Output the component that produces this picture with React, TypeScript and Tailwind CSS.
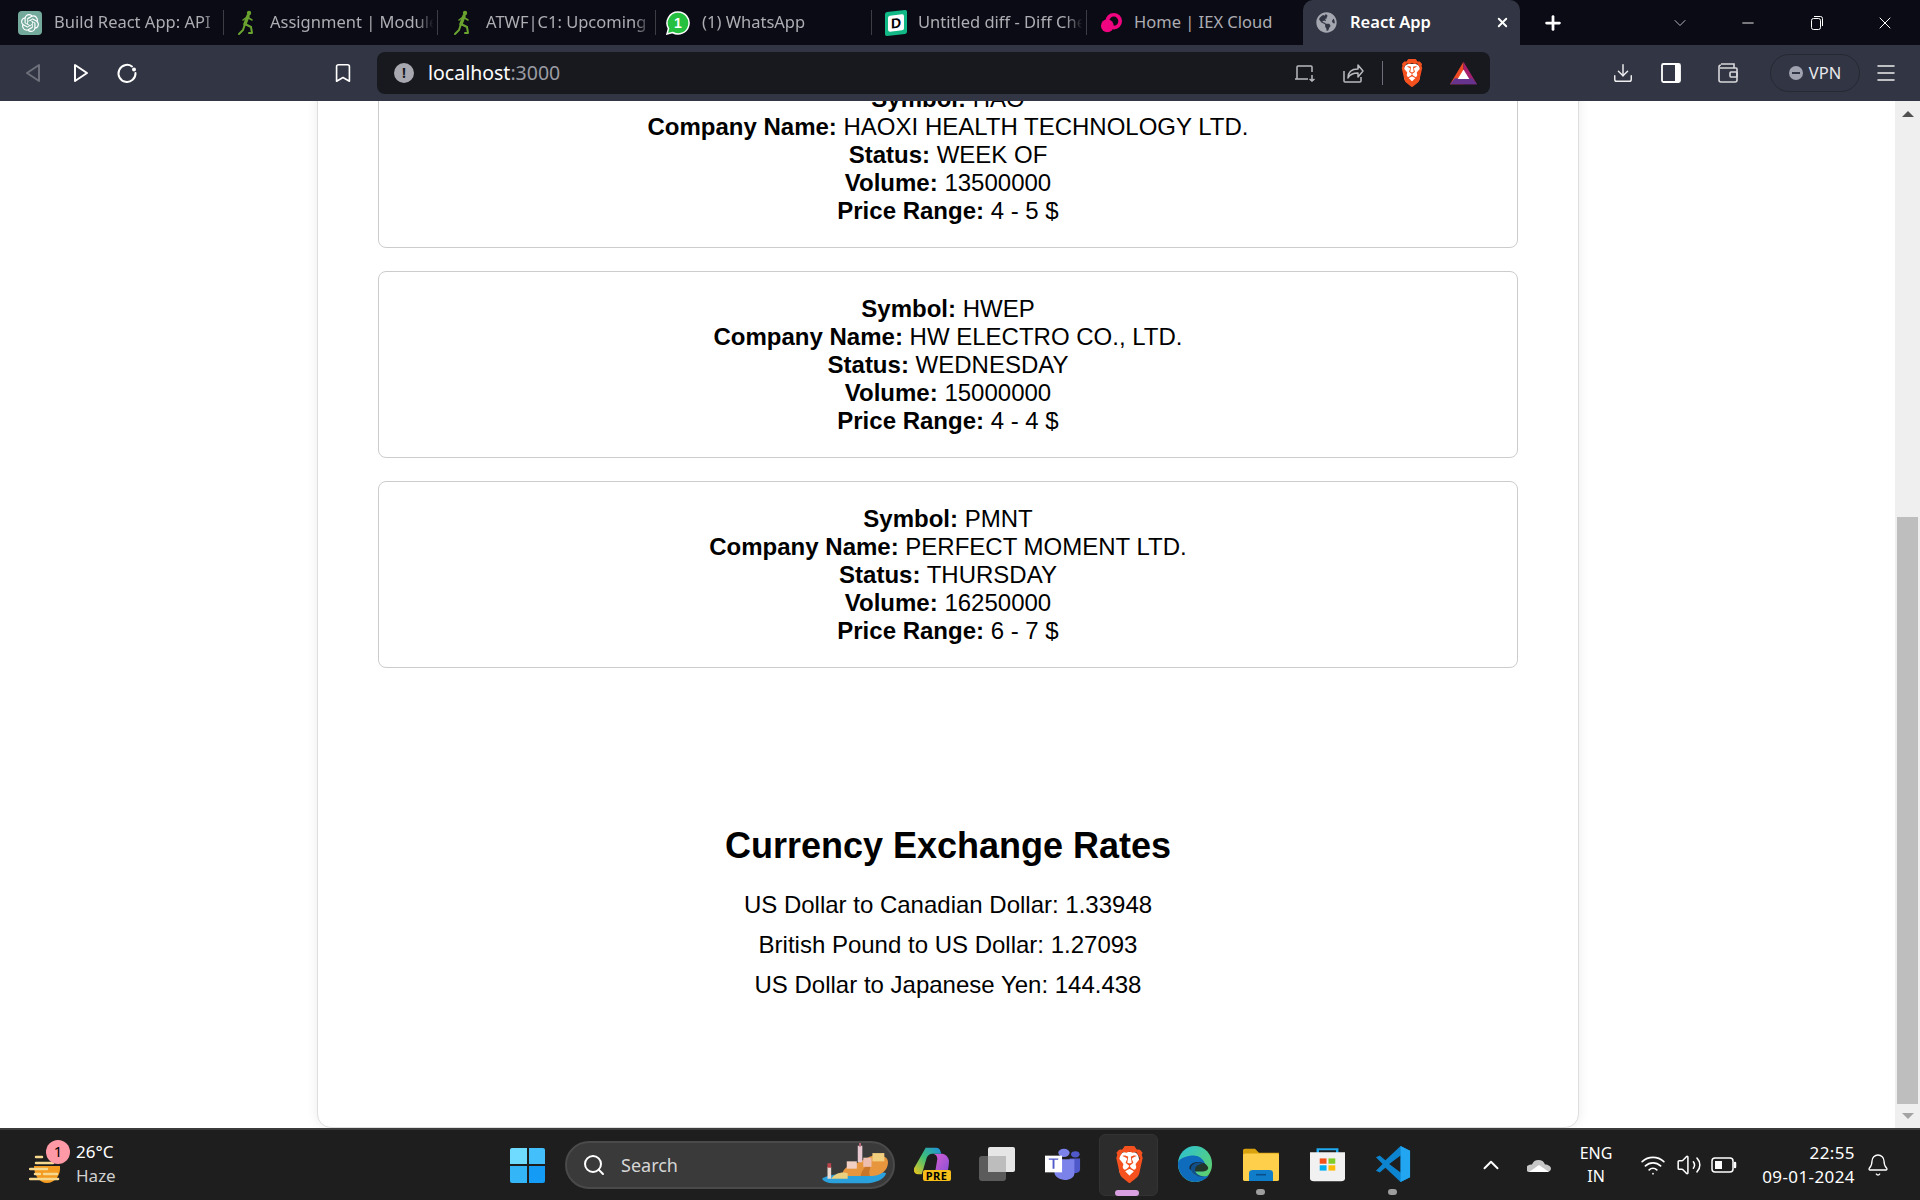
import { ChevronDown, Minus, X, Plus, Bookmark, Download, Menu, Search, Bell, ChevronUp, Wifi, Volume2 } from 'lucide-react';
import { FaGlobeAmericas } from 'react-icons/fa';
import { SiBrave, SiOpenai } from 'react-icons/si';

const ui = "font-['Noto_Sans',sans-serif]";

const ipos = [
  { symbol: 'HAO', name: 'HAOXI HEALTH TECHNOLOGY LTD.', status: 'WEEK OF', volume: '13500000', range: '4 - 5 $' },
  { symbol: 'HWEP', name: 'HW ELECTRO CO., LTD.', status: 'WEDNESDAY', volume: '15000000', range: '4 - 4 $' },
  { symbol: 'PMNT', name: 'PERFECT MOMENT LTD.', status: 'THURSDAY', volume: '16250000', range: '6 - 7 $' },
];

function IexIcon() {
  return (
    <svg viewBox="0 0 24 24" className="h-[22px] w-[22px]">
      <circle cx="15" cy="10" r="7" fill="none" stroke="#f0047f" strokeWidth="4" />
      <circle cx="8" cy="15" r="7" fill="#f0047f" />
    </svg>
  );
}

function DiffIcon() {
  return (
    <div className="grid h-[24px] w-[22px] -skew-y-6 place-items-center rounded-[2px] bg-[#12b886] px-[3px]">
      <span className="grid h-[16px] w-[16px] place-items-center rounded-[2px] bg-white font-['Liberation_Sans',sans-serif] text-[14px] leading-none font-bold text-black">D</span>
    </div>
  );
}

function WhatsAppIcon() {
  return (
    <div className="relative h-[24px] w-[24px]">
      <svg viewBox="0 0 24 24" className="absolute inset-0 h-[24px] w-[24px]">
        <path d="M12 1a11 11 0 1 1-5.500 20.500L1 23l1.500-5.500A11 11 0 0 1 12 1z" fill="#25c03f" stroke="#fff" strokeWidth="1.500" />
      </svg>
      <span className="absolute inset-0 grid place-items-center font-['Liberation_Sans',sans-serif] text-[14px] leading-none font-bold text-white">1</span>
    </div>
  );
}

function RunnerIcon() {
  return (
    <svg viewBox="0 0 16 26" className="h-[26px] w-[16px]" fill="none" stroke="#6aa32f" strokeLinecap="round" strokeLinejoin="round">
      <circle cx="11" cy="3" r="2.200" fill="#6aa32f" stroke="none" />
      <path d="M10 6 7 14" strokeWidth="3.500" />
      <path d="M9 7l5 3M9 7 5 10" strokeWidth="1.500" />
      <path d="M7 14l6 3 1 6h-3" strokeWidth="2" />
      <path d="M7 14l-2 6-4 4" strokeWidth="2" />
    </svg>
  );
}

const tabs = [
  { label: 'Build React App: API', width: 'w-[224px]', pad: 'pl-[18px]', gap: 'gap-[12px]', icon: <span className="grid h-[24px] w-[24px] place-items-center rounded-[4px] bg-[#74aa9c]"><SiOpenai className="h-[18px] w-[18px] text-white" /></span> },
  { label: 'Assignment | Module', width: 'w-[214px]', pad: 'pl-[10px]', gap: 'gap-[12px]', icon: <RunnerIcon /> },
  { label: 'ATWF|C1: Upcoming', width: 'w-[218px]', pad: 'pl-[12px]', gap: 'gap-[12px]', icon: <RunnerIcon /> },
  { label: '(1) WhatsApp', width: 'w-[216px]', pad: 'pl-[10px]', gap: 'gap-[12px]', icon: <WhatsAppIcon /> },
  { label: 'Untitled diff - Diff Checker', width: 'w-[215px]', pad: 'pl-[12px]', gap: 'gap-[10px]', icon: <DiffIcon /> },
];

function ChromeTab({ label, width, pad, gap, icon }: (typeof tabs)[number]) {
  return (
    <div className={`flex h-full shrink-0 items-center border-r border-[#3c3d45] ${width} ${pad} ${gap}`}>
      <span className="grid w-[24px] shrink-0 place-items-center">{icon}</span>
      <span className="min-w-0 flex-1 overflow-hidden pr-[4px] text-[16.500px] whitespace-nowrap text-[#adadb3] [mask-image:linear-gradient(to_right,black_88%,transparent_98%)]">{label}</span>
    </div>
  );
}

function TabBar() {
  return (
    <div className={`flex h-[45px] items-end bg-[#0b0b15] ${ui}`}>
      <div className="flex h-[45px] items-center py-[10px]">
        {tabs.map((tab) => (
          <ChromeTab key={tab.label} {...tab} />
        ))}
      </div>
      <div className="flex h-[45px] w-[216px] shrink-0 items-center gap-[12px] pl-[13px] text-[16.500px] text-[#adadb3]">
        <IexIcon />
        <span>Home | IEX Cloud</span>
      </div>
      <div className="flex h-[45px] w-[217px] shrink-0 items-center rounded-t-[10px] bg-[#323543] pr-[10px] pl-[13px]">
        <FaGlobeAmericas className="h-[21px] w-[21px] text-[#a5a7b0]" />
        <span className="ml-[13px] flex-1 text-[16.500px] font-semibold text-white">React App</span>
        <X className="h-[15px] w-[15px] text-white" strokeWidth={3} />
      </div>
      <div className="flex h-[45px] flex-1 items-center text-white">
        <Plus className="ml-[22px] h-[22px] w-[22px]" strokeWidth={3} />
        <ChevronDown className="ml-[106px] h-[20px] w-[20px] text-[#b6b6bc]" strokeWidth={1.2} />
        <Minus className="ml-[49px] h-[18px] w-[18px]" strokeWidth={1.2} />
        <svg viewBox="0 0 16 16" className="ml-[51px] h-[16px] w-[16px]" fill="none" stroke="#fff" strokeWidth="1">
          <rect x="3.500" y="3.500" width="9" height="11" rx="2" />
          <path d="M6 1.500h6.500a2 2 0 0 1 2 2V11" />
        </svg>
        <X className="ml-[51px] h-[20px] w-[20px]" strokeWidth={1.2} />
      </div>
    </div>
  );
}

function BatIcon() {
  return (
    <svg viewBox="0 0 28 28" preserveAspectRatio="none" className="h-[24px] w-[27px]">
      <path d="M14 1 0 27h14z" fill="#ef4b23" />
      <path d="M14 1 28 27H14z" fill="#a4206e" />
      <path d="M0 27 5 20h18l5 7z" fill="#66338f" />
      <path d="M14 10 8 21h12z" fill="#fff" />
    </svg>
  );
}

function BraveIcon({ size }: { size: string }) {
  return (
    <div className={`relative grid place-items-center ${size}`}>
      <span className="absolute inset-[18%] rounded-[30%] bg-white" />
      <SiBrave className="relative h-full w-full text-[#f4511e]" preserveAspectRatio="none" />
    </div>
  );
}

function Toolbar() {
  return (
    <div className={`flex h-[56px] items-center bg-[#323543] ${ui}`}>
      <div className="flex w-[377px] shrink-0 items-center text-white">
        <svg viewBox="0 0 16 20" className="ml-[25px] h-[20px] w-[16px]" fill="none" stroke="#6d6f7a" strokeWidth="2" strokeLinejoin="round">
          <path d="M14 2v16L2 10z" />
        </svg>
        <svg viewBox="0 0 16 20" className="ml-[32px] h-[20px] w-[16px]" fill="none" stroke="#fff" strokeWidth="2" strokeLinejoin="round">
          <path d="M2 2v16l12-8z" />
        </svg>
        <svg viewBox="0 0 22 22" className="ml-[27px] h-[22px] w-[22px]" fill="none" stroke="#fff" strokeWidth="2" strokeLinecap="round">
          <path d="M16 4.500A8.500 8.500 0 1 0 19.500 11" />
          <circle cx="18" cy="7.500" r="2" fill="#fff" stroke="none" />
        </svg>
        <Bookmark className="ml-[194px] h-[22px] w-[22px]" strokeWidth={1.8} />
      </div>
      <div className="flex h-[42px] w-[1113px] shrink-0 items-center rounded-[8px] bg-[#17191f] pr-[13px] pl-[17px]">
        <span className="grid h-[20px] w-[20px] place-items-center rounded-full bg-[#a8a9b0] text-[14px] leading-none font-bold text-[#17191f]">!</span>
        <span className="ml-[14px] flex-1 text-[19.500px] text-[#9b9ca3]"><span className="text-white">localhost</span>:3000</span>
        <svg viewBox="0 0 22 22" className="h-[22px] w-[22px]" fill="none" stroke="#b9bac0" strokeWidth="1.500">
          <path d="M3 15V5a1 1 0 0 1 1-1h13a1 1 0 0 1 1 1v5M1 17h13M18 13v6m-2.500-2 2.500 2 2.500-2" />
          <path d="M3 15v2" />
        </svg>
        <svg viewBox="0 0 22 22" className="ml-[26px] h-[22px] w-[22px]" fill="none" stroke="#b9bac0" strokeWidth="1.500" strokeLinejoin="round">
          <path d="M2 9v10a1 1 0 0 0 1 1h15a1 1 0 0 0 1-1v-4" />
          <path d="M6 16c0-6 4-9 10-9V3l5 6-5 6v-4c-4 0-8 1-10 5z" />
        </svg>
        <span className="ml-[18px] h-[24px] w-px bg-[#6d6f7a]" />
        <div className="ml-[17px]"><BraveIcon size="h-[28px] w-[24px]" /></div>
        <div className="ml-[26px]"><BatIcon /></div>
      </div>
      <div className="flex flex-1 items-center text-[#eeeef0]">
        <Download className="ml-[122px] h-[22px] w-[22px]" strokeWidth={1.6} />
        <svg viewBox="0 0 22 22" className="ml-[26px] h-[22px] w-[22px]" fill="none" stroke="#fff" strokeWidth="1.800">
          <rect x="2" y="2" width="18" height="18" rx="1.500" />
          <path d="M15 2h4a1 1 0 0 1 1 1v16a1 1 0 0 1-1 1h-4z" fill="#fff" stroke="none" />
        </svg>
        <svg viewBox="0 0 22 22" className="ml-[35px] h-[22px] w-[22px]" fill="none" stroke="#d8d8dc" strokeWidth="1.600">
          <path d="M4 2h13v4M2 5a2 2 0 0 1 2-2M2 5v13a2 2 0 0 0 2 2h14a2 2 0 0 0 2-2V7a1 1 0 0 0-1-1H3" />
          <rect x="13" y="10" width="7" height="5" rx="1" />
        </svg>
        <div className="ml-[31px] flex h-[38px] w-[90px] shrink-0 items-center justify-center gap-[6px] rounded-full border border-[#262833] text-[16.500px] text-[#e8e8ec]">
          <span className="grid h-[14px] w-[14px] place-items-center rounded-full bg-[#a0a2b0]"><span className="h-[2px] w-[8px] bg-[#323543]" /></span>
          VPN
        </div>
        <Menu className="ml-[14px] h-[24px] w-[24px]" strokeWidth={1.5} />
      </div>
    </div>
  );
}

function Field({ label, value }: { label: string; value: string }) {
  return (
    <p>
      <strong className="font-bold">{label}:</strong> {value}
    </p>
  );
}

function PageContent() {
  return (
    <div className="flex min-h-0 flex-1 overflow-hidden bg-white font-['Liberation_Sans',sans-serif] text-black">
      <div className="w-[317px] shrink-0" />
      <div className="-mt-[61px] h-[1088px] w-[1262px] shrink-0 rounded-b-[14px] border border-[#dedede] bg-white px-[60px] pt-[20px] shadow-[0_0_12px_rgba(0,0,0,0.08)]">
        <div className="flex flex-col gap-[23px]">
          {ipos.map((ipo) => (
            <div key={ipo.symbol} className="h-[187px] rounded-lg border border-[#cccccc] pt-[23px] text-center text-[24px] leading-[28px]">
              <Field label="Symbol" value={ipo.symbol} />
              <Field label="Company Name" value={ipo.name} />
              <Field label="Status" value={ipo.status} />
              <Field label="Volume" value={ipo.volume} />
              <Field label="Price Range" value={ipo.range} />
            </div>
          ))}
        </div>
        <h2 className="mt-[157px] text-center text-[36px] leading-[41px] font-bold">Currency Exchange Rates</h2>
        <div className="mt-[19px] text-center text-[24px] leading-[40px]">
          <p>US Dollar to Canadian Dollar: 1.33948</p>
          <p>British Pound to US Dollar: 1.27093</p>
          <p>US Dollar to Japanese Yen: 144.438</p>
        </div>
      </div>
      <div className="flex-1" />
      <div className="flex w-[25px] shrink-0 flex-col bg-[#efefef]">
        <div className="flex h-[24px] items-center justify-center"><span className="mt-[2px] h-0 w-0 border-x-[6px] border-b-[6px] border-x-transparent border-b-[#505050]" /></div>
        <div className="mt-[392px] mr-[2px] ml-[2px] h-[587px] bg-[#bebebe]" />
        <div className="flex h-[24px] items-center justify-center"><span className="h-0 w-0 border-x-[6px] border-t-[6px] border-x-transparent border-t-[#a3a3a3]" /></div>
      </div>
    </div>
  );
}

function HazeIcon() {
  return (
    <svg viewBox="0 0 34 28" className="h-[28px] w-[34px]">
      <path d="M5 11h26c1 9-5 17-13 17S5 20 5 11z" fill="#f39a1f" />
      <g stroke="#f6d98f" strokeWidth="2.500" strokeLinecap="round">
        <path d="M7 2h6M7 8h17M1 14h17M6 19h5M15 19h13M1 24h28" />
      </g>
    </svg>
  );
}

function StartIcon() {
  return (
    <div className="grid h-[35px] w-[35px] grid-cols-2 gap-[2px]">
      <span className="rounded-tl-[2px] bg-[#6fdcff]" />
      <span className="rounded-tr-[2px] bg-[#43c0fb]" />
      <span className="rounded-bl-[2px] bg-[#33b5f8]" />
      <span className="rounded-br-[2px] bg-[#149bf5]" />
    </div>
  );
}

function IslandArt() {
  return (
    <svg viewBox="0 0 76 48" className="h-[44px] w-[76px]">
      <path d="M2 39c10-7 60-10 70-6-2 7-12 11-24 11H14C8 44 4 42 2 39z" fill="#2aa0dc" />
      <path d="M24 36c0-7 6-12 14-13l16-8c8-3 20-2 20 6 0 9-8 15-18 15z" fill="#e8963e" />
      <path d="M44 36c2-8 6-12 12-14-2 6-3 10-2 14z" fill="#c9762b" />
      <rect x="41" y="3" width="5" height="18" fill="#e8c9d2" />
      <rect x="42.500" y="0" width="2" height="4" fill="#b86a7a" />
      <rect x="29" y="20" width="11" height="8" fill="#f1cfc2" />
      <rect x="47" y="16" width="9" height="10" fill="#eebfae" />
      <rect x="57" y="11" width="13" height="9" fill="#f2cf7e" />
      <rect x="8" y="26" width="4" height="13" fill="#e9d9d0" />
      <rect x="8" y="22" width="4" height="5" fill="#b9454b" />
      <path d="M12 39c4-6 12-8 18-6v6z" fill="#e9cf7f" />
    </svg>
  );
}

function CopilotIcon() {
  return (
    <div className="relative h-[34px] w-[35px]">
      <svg viewBox="0 0 36 40" preserveAspectRatio="none" className="h-[34px] w-[35px]">
        <defs>
          <linearGradient id="cpA" x1="0" y1="1" x2="1" y2="0">
            <stop offset="0" stopColor="#f5c518" />
            <stop offset="0.5" stopColor="#3fbf76" />
            <stop offset="1" stopColor="#1d8fe0" />
          </linearGradient>
          <linearGradient id="cpB" x1="0" y1="0" x2="1" y2="1">
            <stop offset="0" stopColor="#e15fd0" />
            <stop offset="1" stopColor="#7a4fd8" />
          </linearGradient>
        </defs>
        <path d="M19 8h9c4 0 7 3 8 8 0 8-2 17-4 22H18l4-10 2-14c0-3-2-6-5-6z" fill="url(#cpB)" />
        <path d="M12 1h11c2 0 3 1 4 3l1 4H19c-3 0-5 2-6 5L8 32H4C1 32-1 29 0 25z" fill="url(#cpA)" />
      </svg>
      <span className={`absolute right-[-2px] bottom-0 rounded-[2px] bg-[#f6bf1a] px-[3px] text-[11px] leading-[11px] font-bold tracking-[0.5px] text-black ${ui}`}>PRE</span>
    </div>
  );
}

function WidgetsIcon() {
  return (
    <div className="relative h-[34px] w-[36px]">
      <span className="absolute bottom-0 left-0 h-[25px] w-[27px] rounded-[3px] bg-[#5b5b5b]" />
      <span className="absolute top-0 right-0 h-[25px] w-[27px] rounded-[2px] bg-[#e6e6e6]" />
      <span className="absolute top-[9px] left-[9px] h-[16px] w-[18px] bg-[#bdbdbd]" />
    </div>
  );
}

function TeamsIcon() {
  return (
    <svg viewBox="0 0 38 46" preserveAspectRatio="none" className="h-[32px] w-[36px]">
      <circle cx="20" cy="7" r="6" fill="#7b83eb" />
      <circle cx="32" cy="9" r="4.500" fill="#5059c9" />
      <path d="M26 15h11v16c0 4-4 6-8 5z" fill="#5059c9" />
      <path d="M10 16h21v21c0 5-5 9-10 9s-11-5-11-10z" fill="#7b83eb" />
      <rect x="0" y="11" width="18" height="24" fill="#fff" />
      <path d="M4 16h10M9 16v14" stroke="#5059c9" strokeWidth="2" fill="none" />
    </svg>
  );
}

function EdgeIcon() {
  return (
    <svg viewBox="0 0 38 48" preserveAspectRatio="none" className="h-[36px] w-[36px]">
      <defs>
        <linearGradient id="edgeA" x1="0" y1="0" x2="1" y2="1">
          <stop offset="0" stopColor="#2ac1d8" />
          <stop offset="1" stopColor="#66d35c" />
        </linearGradient>
      </defs>
      <ellipse cx="19" cy="24" rx="18" ry="24" fill="url(#edgeA)" />
      <path d="M1 24C1 36 9 48 19 48c6 0 11-3 15-9-6 3-13 2-17-2-4-5-3-11 2-14 3-2 8-1 11 2C28 15 20 11 14 13 6 15 1 18 1 24z" fill="#0f6cbd" />
      <path d="M13 30c0-6 6-10 13-8 4 1 6 4 7 7 0 3-3 5-7 5H16" fill="#1b1b1b" opacity="0.850" />
      <path d="M17 37c-4-5-3-11 2-14 3-2 6-1 8 1-5 0-8 3-8 8 0 4 4 8 10 9-5 1-9-1-12-4z" fill="#11508c" />
    </svg>
  );
}

function ExplorerIcon() {
  return (
    <svg viewBox="0 0 36 42" preserveAspectRatio="none" className="h-[33px] w-[36px]">
      <path d="M0 3a2 2 0 0 1 2-2h10l4 5h20v6H0z" fill="#d9a20f" />
      <rect x="0" y="7" width="36" height="35" rx="2" fill="#fdcf4a" />
      <path d="M6 42V32a4 4 0 0 1 4-4h16a4 4 0 0 1 4 4v10z" fill="#0f7dc9" />
      <rect x="13" y="33" width="10" height="2" fill="#0a4f8a" />
    </svg>
  );
}

function StoreIcon() {
  return (
    <svg viewBox="0 0 36 46" preserveAspectRatio="none" className="h-[35px] w-[35px]">
      <path d="M8 9V3h20v6" fill="none" stroke="#20a9ee" strokeWidth="2.500" />
      <path d="M0 7h36v34a4 4 0 0 1-4 4H4a4 4 0 0 1-4-4z" fill="#f1f1f1" />
      <rect x="10" y="15" width="7" height="7" fill="#f1511b" />
      <rect x="19" y="15" width="7" height="7" fill="#80cc28" />
      <rect x="10" y="24" width="7" height="7" fill="#00adef" />
      <rect x="19" y="24" width="7" height="7" fill="#fbbc09" />
    </svg>
  );
}

function VsCodeIcon() {
  return (
    <svg viewBox="0 0 36 38" className="h-[36px] w-[36px]">
      <path d="M26 0 10 15 4 10 0 12l7 7-7 7 4 2 6-5 16 15 10-5V5zm0 10v18L14 19z" fill="#0c84cf" />
      <path d="M26 0l10 5v28l-10 5z" fill="#22a6f2" />
    </svg>
  );
}

function SystemTray() {
  return (
    <div className="flex h-full items-center text-white">
      <div className="flex w-[48px] justify-center"><ChevronUp className="h-[26px] w-[26px]" strokeWidth={1.8} /></div>
      <div className="flex w-[48px] justify-center">
        <svg viewBox="0 0 24 14" className="h-[16px] w-[24px]">
          <path d="M2 14a3.500 3.500 0 0 1-1-6.500 6 6 0 0 1 4-1 7 7 0 0 1 13 0c3 0 6 2 6 4s-2 3.500-4 3.500z" fill="#c6c6c6" />
          <path d="M2 14 12 7l10 7z" fill="#fff" />
        </svg>
      </div>
      <div className="w-[66px] text-center text-[16px] leading-[23px]">
        <p>ENG</p>
        <p>IN</p>
      </div>
      <div className="ml-[6px] flex w-[36px] justify-center"><Wifi className="h-[26px] w-[26px]" strokeWidth={1.6} /></div>
      <div className="flex w-[36px] justify-center"><Volume2 className="h-[26px] w-[26px]" strokeWidth={1.4} /></div>
      <div className="flex w-[34px] justify-center">
        <svg viewBox="0 0 26 18" className="h-[18px] w-[26px]" fill="none" stroke="#fff" strokeWidth="1.500">
          <rect x="1" y="2" width="21" height="14" rx="3" />
          <rect x="4" y="5" width="7" height="8" fill="#fff" stroke="none" />
          <path d="M24 7v4" strokeWidth="2.500" strokeLinecap="round" />
        </svg>
      </div>
      <div className="w-[114px] text-right text-[17px] leading-[24px] tracking-[0.4px]">
        <p>22:55</p>
        <p>09-01-2024</p>
      </div>
      <div className="flex w-[46px] justify-center"><Bell className="h-[24px] w-[24px]" strokeWidth={1.3} /></div>
    </div>
  );
}

const pinned = [
  { key: 'copilot', icon: <CopilotIcon /> },
  { key: 'widgets', icon: <WidgetsIcon /> },
  { key: 'teams', icon: <TeamsIcon /> },
  { key: 'brave', icon: <BraveIcon size="h-[37px] w-[31px]" />, active: true },
  { key: 'edge', icon: <EdgeIcon /> },
  { key: 'explorer', icon: <ExplorerIcon />, running: true },
  { key: 'store', icon: <StoreIcon /> },
  { key: 'vscode', icon: <VsCodeIcon />, running: true },
];

function Taskbar() {
  return (
    <div className={`flex h-[72px] items-center border-t-2 border-[#3b3b3b] bg-[#1e1e1e] ${ui}`}>
      <div className="flex w-[510px] shrink-0 items-center pl-[29px]">
        <div className="relative mt-[7px]">
          <HazeIcon />
          <span className="absolute -top-[15px] left-[17px] grid h-[24px] w-[24px] place-items-center rounded-full bg-[#ff99a6] text-[15px] leading-none text-black">1</span>
        </div>
        <div className="ml-[13px] -translate-y-[1px] text-[17px] leading-[24px]">
          <p className="text-white">26°C</p>
          <p className="text-[#cfcfcf]">Haze</p>
        </div>
      </div>
      <StartIcon />
      <div className="ml-[20px] flex h-[48px] w-[330px] shrink-0 items-center rounded-full border-2 border-[#4a4a4a] bg-[#3a3a3a] pl-[15px] text-white">
        <Search className="h-[24px] w-[24px]" strokeWidth={2} />
        <span className="ml-[15px] flex-1 text-[18px] text-[#d6d6d6]">Search</span>
        <IslandArt />
      </div>
      <div className="ml-[3px] flex h-full">
        {pinned.map((item) => (
          <div key={item.key} className="relative flex w-[66px] items-center justify-center">
            {item.active && <span className="absolute top-[4px] bottom-[4px] left-[3px] w-[59px] rounded-[6px] border border-[#333333] bg-[#2c2c2c]" />}
            <div className="relative -translate-y-[1px]">{item.icon}</div>
            {item.active && <span className="absolute bottom-[4px] left-[19px] h-[6px] w-[24px] rounded-full bg-[#d8a0e0]" />}
            {item.running && <span className="absolute bottom-[5px] left-[28px] h-[6px] w-[9px] rounded-full bg-[#9e9e9e]" />}
          </div>
        ))}
      </div>
      <div className="ml-[41px] h-full">
        <SystemTray />
      </div>
    </div>
  );
}

export default function App() {
  return (
    <div className="flex h-[1200px] w-[1920px] flex-col overflow-hidden">
      <TabBar />
      <Toolbar />
      <PageContent />
      <Taskbar />
    </div>
  );
}
